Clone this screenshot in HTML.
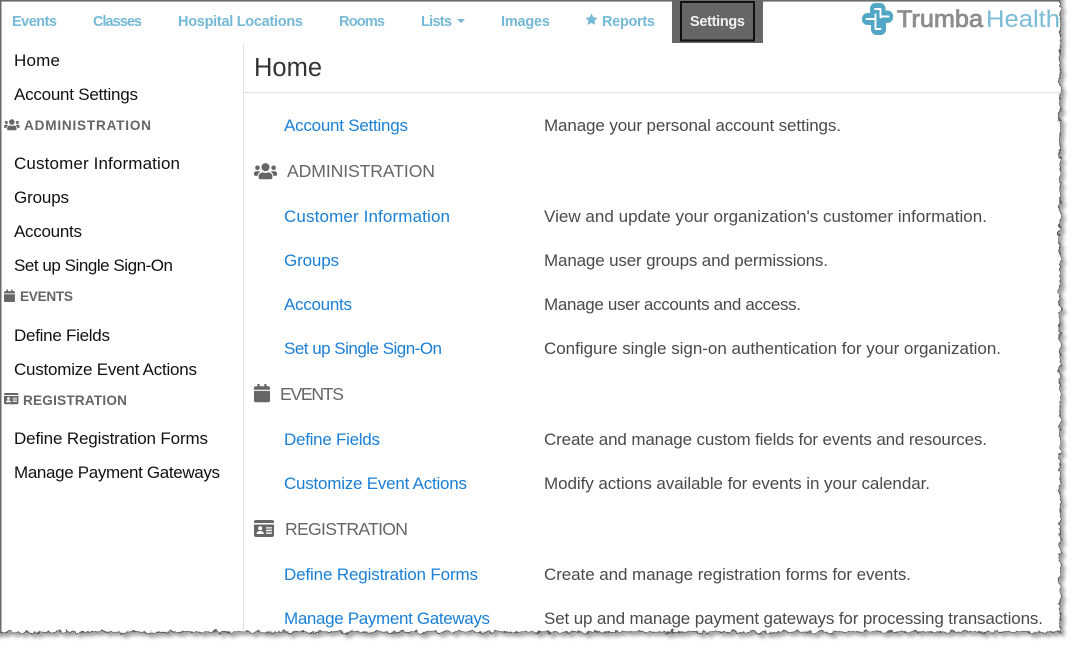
<!DOCTYPE html>
<html lang="en">
<head>
<meta charset="utf-8">
<title>Home</title>
<style>
html,body{margin:0;padding:0;background:#fff;width:1075px;height:645px;overflow:hidden}
svg{display:block}
text{font-family:"Liberation Sans",sans-serif;white-space:pre}
.n{font-size:14.5px;font-weight:700;fill:#74b9d6}
.s{font-size:17px;fill:#111}
.h{font-size:13.6px;font-weight:700;fill:#666}
.l{font-size:17px;fill:#1a7fd6}
.d{font-size:17px;fill:#4a4a4a}
.m{font-size:17.600px;fill:#666}
.i{fill:#666}
</style>
</head>
<body>
<svg xmlns="http://www.w3.org/2000/svg" width="1075" height="645" viewBox="0 0 1075 645">
<defs>
<filter id="torn" x="-30" y="-30" width="1135" height="705" filterUnits="userSpaceOnUse" color-interpolation-filters="sRGB">
<feTurbulence type="fractalNoise" baseFrequency="0.16" numOctaves="3" seed="7" result="noise"/>
<feDisplacementMap in="SourceGraphic" in2="noise" scale="7" xChannelSelector="R" yChannelSelector="G" result="edge"/>
<feGaussianBlur in="edge" stdDeviation="1.8" result="blur"/>
<feOffset in="blur" dx="3.500" dy="3.500" result="off"/>
<feColorMatrix in="off" type="matrix" values="0 0 0 0 0.4 0 0 0 0 0.4 0 0 0 0 0.4 0 0 0 0.6 0" result="shadow"/>
<feMerge><feMergeNode in="shadow"/><feMergeNode in="edge"/></feMerge>
</filter>
<path id="users" d="M96 224c35.3 0 64-28.7 64-64s-28.7-64-64-64-64 28.7-64 64 28.7 64 64 64zm448 0c35.3 0 64-28.7 64-64s-28.7-64-64-64-64 28.7-64 64 28.7 64 64 64zm32 32h-64c-17.6 0-33.5 7.1-45.1 18.6 40.3 22.1 68.9 62 75.1 109.4h66c17.7 0 32-14.3 32-32v-32c0-35.3-28.7-64-64-64zm-256 0c61.9 0 112-50.1 112-112S381.9 32 320 32 208 82.1 208 144s50.1 112 112 112zm76.8 32h-8.3c-20.8 10-43.9 16-68.5 16s-47.6-6-68.5-16h-8.3C179.6 288 128 339.6 128 403.2V432c0 26.5 21.5 48 48 48h288c26.5 0 48-21.5 48-48v-28.8c0-63.6-51.6-115.2-115.2-115.2zm-223.7-13.4C161.5 263.1 145.6 256 128 256H64c-35.3 0-64 28.7-64 64v32c0 17.7 14.3 32 32 32h65.9c6.3-47.4 34.9-87.3 75.2-109.4z"/>
<path id="cal" d="M12 192h424c6.6 0 12 5.4 12 12v260c0 26.5-21.5 48-48 48H48c-26.5 0-48-21.5-48-48V204c0-6.6 5.4-12 12-12zm436-44v-36c0-26.5-21.5-48-48-48h-48V12c0-6.6-5.4-12-12-12h-40c-6.6 0-12 5.4-12 12v52H160V12c0-6.6-5.4-12-12-12h-40c-6.6 0-12 5.4-12 12v52H48C21.5 64 0 85.5 0 112v36c0 6.6 5.4 12 12 12h424c6.6 0 12-5.4 12-12z"/>
<g id="idc">
<path d="M2 0h16a2 2 0 0 1 2 2v1H0V2a2 2 0 0 1 2-2zM0 4.500h20V15a2 2 0 0 1-2 2H2a2 2 0 0 1-2-2z"/>
<circle cx="6.2" cy="8.3" r="2" fill="#fff"/>
<path d="M2.600 14c0-2 1.400-3 3.600-3s3.600 1 3.600 3z" fill="#fff"/>
<path d="M12 7.200h6v1.300h-6zM12 9.800h6v1.300h-6zM12 12.400h6v1.300h-6z" fill="#fff"/>
</g>
</defs>

<rect x="-30" y="-30" width="1090" height="662" fill="#fff" stroke="#5f5f5f" stroke-width="1.2" filter="url(#torn)"/>
<rect x="0" y="0" width="1060" height="1.6" fill="#6a6a6a"/>
<rect x="0" y="0" width="1.5" height="632" fill="#6a6a6a"/>

<!-- top navigation -->
<text class="n" x="12" y="26" textLength="45">Events</text>
<text class="n" x="93" y="26" textLength="49">Classes</text>
<text class="n" x="178" y="26" textLength="125">Hospital Locations</text>
<text class="n" x="339" y="26" textLength="46">Rooms</text>
<text class="n" x="421" y="26" textLength="31">Lists</text>
<path d="M457 19h8l-4 4z" fill="#74b9d6"/>
<text class="n" x="501" y="26" textLength="49">Images</text>
<path d="M591.500 13.500l1.800 3.800 4.200.6-3 2.900.7 4.100-3.700-2-3.700 2 .7-4.100-3-2.900 4.200-.6z" fill="#74b9d6"/>
<text class="n" x="602" y="26" textLength="53">Reports</text>
<rect x="672" y="1" width="91" height="42" fill="#666"/>
<rect x="681" y="2" width="73" height="38.5" fill="#666" stroke="#111" stroke-width="2"/>
<text class="n" x="690" y="26" textLength="55" style="fill:#f0f0f0">Settings</text>

<!-- logo -->
<g fill="#52a7c6">
<rect x="870" y="3" width="15.500" height="20" rx="5.500"/>
<rect x="862" y="13" width="20" height="12" rx="5.500"/>
<rect x="873" y="10.500" width="20" height="12.500" rx="5.500"/>
<rect x="871" y="15" width="15" height="20" rx="5.500"/>
</g>
<g fill="none" stroke="#fff" stroke-width="1.900" stroke-linecap="round" stroke-linejoin="round">
<path d="M875 9h5.500v8.500"/>
<path d="M881 16.500h7.500"/>
<path d="M866.500 19H875"/>
<path d="M875.500 14.500V29h5"/>
</g>
<text x="897" y="27" textLength="86" lengthAdjust="spacingAndGlyphs" style="font-size:24px;fill:#8c8c8c;stroke:#8c8c8c;stroke-width:.8">Trumba</text>
<text x="986" y="27" textLength="74" lengthAdjust="spacingAndGlyphs" style="font-size:24px;fill:#7dbcd6">Health</text>

<!-- dividers -->
<rect x="243" y="43" width="1" height="589" fill="#e2e2e2"/>
<rect x="244" y="92" width="816" height="1" fill="#e2e2e2"/>

<!-- sidebar -->
<text class="s" x="14" y="66" textLength="46">Home</text>
<text class="s" x="14" y="100" textLength="124">Account Settings</text>
<use href="#users" class="i" transform="translate(4 118.500) scale(.0245)"/>
<text class="h" x="24" y="130" textLength="127">ADMINISTRATION</text>
<text class="s" x="14" y="169" textLength="166">Customer Information</text>
<text class="s" x="14" y="203" textLength="55">Groups</text>
<text class="s" x="14" y="237" textLength="68">Accounts</text>
<text class="s" x="14" y="271" textLength="159">Set up Single Sign-On</text>
<use href="#cal" class="i" transform="translate(4 289.500) scale(.0245)"/>
<text class="h" x="20" y="301" textLength="53">EVENTS</text>
<text class="s" x="14" y="341" textLength="96">Define Fields</text>
<text class="s" x="14" y="375" textLength="183">Customize Event Actions</text>
<use href="#idc" class="i" transform="translate(4 393) scale(.72 .66)"/>
<text class="h" x="23" y="405" textLength="104">REGISTRATION</text>
<text class="s" x="14" y="444" textLength="194">Define Registration Forms</text>
<text class="s" x="14" y="478" textLength="206">Manage Payment Gateways</text>

<!-- main -->
<text x="254" y="76" textLength="68" style="font-size:25.500px;fill:#333">Home</text>

<text class="l" x="284" y="131" textLength="124">Account Settings</text>
<text class="d" x="544" y="131" textLength="297">Manage your personal account settings.</text>

<use href="#users" class="i" transform="translate(254 162) scale(.036)"/>
<text class="m" x="287" y="177" textLength="148">ADMINISTRATION</text>

<text class="l" x="284" y="222" textLength="166">Customer Information</text>
<text class="d" x="544" y="222" textLength="443">View and update your organization's customer information.</text>
<text class="l" x="284" y="266" textLength="55">Groups</text>
<text class="d" x="544" y="266" textLength="284">Manage user groups and permissions.</text>
<text class="l" x="284" y="310" textLength="68">Accounts</text>
<text class="d" x="544" y="310" textLength="257">Manage user accounts and access.</text>
<text class="l" x="284" y="354" textLength="158">Set up Single Sign-On</text>
<text class="d" x="544" y="354" textLength="457">Configure single sign-on authentication for your organization.</text>

<use href="#cal" class="i" transform="translate(254 384) scale(.0357)"/>
<text class="m" x="280" y="400" textLength="64">EVENTS</text>

<text class="l" x="284" y="445" textLength="96">Define Fields</text>
<text class="d" x="544" y="445" textLength="443">Create and manage custom fields for events and resources.</text>
<text class="l" x="284" y="489" textLength="183">Customize Event Actions</text>
<text class="d" x="544" y="489" textLength="386">Modify actions available for events in your calendar.</text>

<use href="#idc" class="i" transform="translate(254 520)"/>
<text class="m" x="285" y="535" textLength="123">REGISTRATION</text>

<text class="l" x="284" y="580" textLength="194">Define Registration Forms</text>
<text class="d" x="544" y="580" textLength="367">Create and manage registration forms for events.</text>
<text class="l" x="284" y="624" textLength="206">Manage Payment Gateways</text>
<text class="d" x="544" y="624" textLength="499">Set up and manage payment gateways for processing transactions.</text>
</svg>
</body>
</html>
